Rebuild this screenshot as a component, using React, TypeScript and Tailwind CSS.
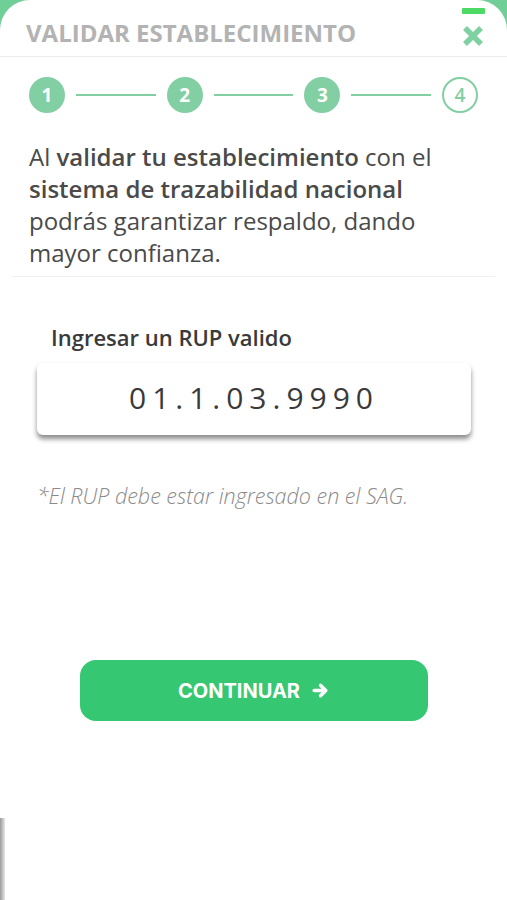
import React from "react";

const open = { fontFamily: '"Open Sans", "Noto Sans", sans-serif' };

function Step({ n, filled }: { n: number; filled: boolean }) {
  return filled ? (
    <div className="w-[36px] h-[36px] rounded-full bg-[#82cfa3] flex items-center justify-center text-white text-[19px] font-bold shrink-0" style={open}>
      {n}
    </div>
  ) : (
    <div className="w-[36px] h-[36px] rounded-full border-2 border-[#82cfa3] flex items-center justify-center text-[#82cfa3] text-[19px] font-semibold shrink-0" style={open}>
      {n}
    </div>
  );
}

function Line() {
  return <div className="flex-1 h-[2px] bg-[#82cfa3] mx-[11px]" />;
}

export default function App() {
  return (
    <div className="relative w-full h-[900px] bg-[#6fcf97] overflow-hidden">
      <div className="h-full bg-white rounded-t-[30px] flex flex-col">
        <div className="relative h-[57px] border-b border-[#ececec] flex items-center px-[26px]">
          <div className="text-[24px] font-bold text-[#b3b3b3] pt-[9px]" style={open}>
            VALIDAR ESTABLECIMIENTO
          </div>
          <div className="absolute right-[22px] top-[8px] flex flex-col items-center">
            <div className="w-[23px] h-[6px] bg-[#4cd964] rounded-[1px]" />
            <svg width="24" height="24" viewBox="0 0 24 24" className="mt-[10px]">
              <path d="M4 4 L20 20 M20 4 L4 20" stroke="#7fd1a1" strokeWidth="5.5" strokeLinecap="butt" />
            </svg>
          </div>
        </div>

        <div className="flex items-center px-[29px] pt-[20px] h-[76px] pb-[20px]">
          <Step n={1} filled />
          <Line />
          <Step n={2} filled />
          <Line />
          <Step n={3} filled />
          <Line />
          <Step n={4} filled={false} />
        </div>

        <div className="mx-[12px] border-b border-[#f0f0f0] pb-[7px]">
          <p className="px-[17px] pt-[8px] text-[24px] leading-[32px] text-[#4a4a4a]" style={open}>
            Al <span className="font-semibold">validar tu establecimiento</span> con el
            <br />
            <span className="font-semibold">sistema de trazabilidad nacional</span>
            <br />
            podrás garantizar respaldo, dando
            <br />
            mayor confianza.
          </p>
        </div>

        <div className="pl-[51px] pt-[44px] text-[22px] font-semibold text-[#3a3a3a]" style={open}>
          Ingresar un RUP valido
        </div>
        <div className="mx-[37px] mt-[9px] w-[434px] h-[72px] rounded-[6px] bg-white shadow-[0_4px_5px_rgba(0,0,0,0.45)] flex items-center justify-center">
          <span className="text-[30px] text-[#3a3a3a] tracking-[0.2em] pb-[4px]" style={open}>
            01.1.03.9990
          </span>
        </div>

        <div className="pl-[37px] mt-[45px] text-[21.5px] italic font-light text-[#8a8a8a]" style={open}>
          *El RUP debe estar ingresado en el SAG.
        </div>

        <div className="flex justify-center mt-[148px]">
          <button className="w-[348px] h-[61px] rounded-[16px] bg-[#35c772] flex items-center justify-center gap-[12px] text-white">
            <span className="text-[20px] font-bold" style={{ fontFamily: 'Inter, "Liberation Sans", sans-serif' }}>
              CONTINUAR
            </span>
            <svg width="17" height="17" viewBox="0 0 16 16">
              <path d="M2 8 H13 M8 3 L13 8 L8 13" stroke="white" strokeWidth="3.2" fill="none" strokeLinecap="round" strokeLinejoin="round" />
            </svg>
          </button>
        </div>
      </div>
      <div className="absolute left-0 top-[818px] w-[5px] h-[82px] bg-gradient-to-r from-[#9a9a9a] to-[#e8e8e8]" />
    </div>
  );
}
